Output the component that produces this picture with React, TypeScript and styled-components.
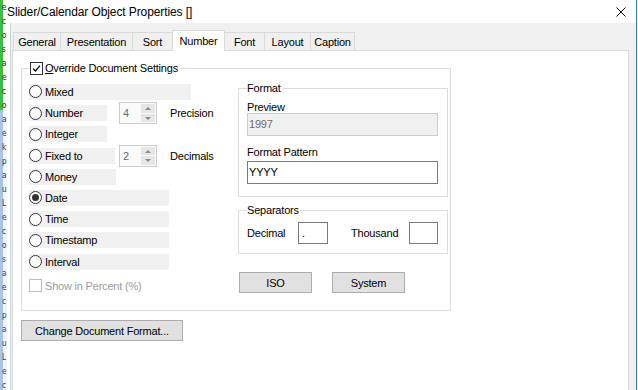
import styled, { createGlobalStyle } from "styled-components";

const GlobalStyle = createGlobalStyle`
  html, body {
    margin: 0;
    padding: 0;
    background: #fff;
  }
  body {
    font-family: "Liberation Sans", Arial, sans-serif;
    font-size: 11px;
    letter-spacing: -0.2px;
    color: #000;
  }
  * {
    box-sizing: border-box;
  }
`;

const TABS = [
  { label: "General", w: 47 },
  { label: "Presentation", w: 72 },
  { label: "Sort", w: 40 },
  { label: "Number", w: 53 },
  { label: "Font", w: 39 },
  { label: "Layout", w: 46 },
  { label: "Caption", w: 45 },
];
const ACTIVE_TAB = 3;

type Option = {
  label: string;
  w: number;
  spin?: { value: string; label: string };
  checked?: boolean;
};

const OPTIONS: Option[] = [
  { label: "Mixed", w: 162 },
  { label: "Number", w: 78, spin: { value: "4", label: "Precision" } },
  { label: "Integer", w: 78 },
  { label: "Fixed to", w: 86, spin: { value: "2", label: "Decimals" } },
  { label: "Money", w: 87 },
  { label: "Date", w: 140, checked: true },
  { label: "Time", w: 140 },
  { label: "Timestamp", w: 140 },
  { label: "Interval", w: 140 },
];

// fragments of the window lying behind the dialog
const BACKDROP = "ecosaecoaekpauLecosaecpauLec".split("");

const CheckMark = () => (
  <svg width="9" height="9" viewBox="0 0 9 9">
    <path d="M1 4.6 L3.4 7 L8 1.6" fill="none" stroke="#000" strokeWidth="1.2" />
  </svg>
);

const CloseIcon = () => (
  <svg width="10" height="10" viewBox="0 0 10 10">
    <path d="M0.5 0.5 L9.5 9.5 M9.5 0.5 L0.5 9.5" stroke="#000" strokeWidth="1" />
  </svg>
);

const App = () => {
  return (
    <>
      <GlobalStyle />
      <S.Screen>
        <S.Backdrop>
          {BACKDROP.map((ch, i) => (
            <S.BackdropChar key={i} $blue={i > 7}>
              {ch}
            </S.BackdropChar>
          ))}
        </S.Backdrop>

        <S.Dialog>
          <S.TitleBar>
            <S.Title>Slider/Calendar Object Properties []</S.Title>
            <CloseIcon />
          </S.TitleBar>

          <S.Body>
            <S.TabRow>
              {TABS.map((tab, i) => (
                <S.Tab
                  key={tab.label}
                  $w={tab.w}
                  $active={i === ACTIVE_TAB}
                  $noLeft={i === ACTIVE_TAB + 1}
                  $last={i === TABS.length - 1}
                >
                  {tab.label}
                </S.Tab>
              ))}
            </S.TabRow>

            <S.Panel>
              <S.Group>
                <S.Legend>
                  <S.Check>
                    <CheckMark />
                  </S.Check>
                  <span>
                    <u>O</u>verride Document Settings
                  </span>
                </S.Legend>

                <S.Columns>
                  <S.Options>
                    {OPTIONS.map((opt) => (
                      <S.OptionRow key={opt.label}>
                        <S.OptionBox $w={opt.w}>
                          <S.Radio>{opt.checked && <S.RadioDot />}</S.Radio>
                          {opt.label}
                        </S.OptionBox>
                        {opt.spin && (
                          <>
                            <S.Spinner>
                              <S.SpinValue>{opt.spin.value}</S.SpinValue>
                              <S.SpinButtons>
                                <S.SpinButton>
                                  <S.Arrow $up />
                                </S.SpinButton>
                                <S.SpinButton>
                                  <S.Arrow />
                                </S.SpinButton>
                              </S.SpinButtons>
                            </S.Spinner>
                            <S.SpinLabel>{opt.spin.label}</S.SpinLabel>
                          </>
                        )}
                      </S.OptionRow>
                    ))}
                    <S.PercentRow>
                      <S.Check $disabled />
                      Show in Percent (%)
                    </S.PercentRow>
                  </S.Options>

                  <S.Side>
                    <S.SubGroup $pb={12}>
                      <S.SubLegend>Format</S.SubLegend>
                      <S.FieldLabel $mt={7}>Preview</S.FieldLabel>
                      <S.TextBox $disabled>1997</S.TextBox>
                      <S.FieldLabel $mt={10}>Format Pattern</S.FieldLabel>
                      <S.TextBox $mt={3}>YYYY</S.TextBox>
                    </S.SubGroup>

                    <S.SubGroup $pb={9} $mt={7}>
                      <S.SubLegend>Separators</S.SubLegend>
                      <S.SepRow>
                        <S.SepLabel $w={51}>Decimal</S.SepLabel>
                        <S.SepBox $w={30}>.</S.SepBox>
                        <S.SepLabel $ml={23}>Thousand</S.SepLabel>
                        <S.SepBox $w={29} $end />
                      </S.SepRow>
                    </S.SubGroup>

                    <S.ButtonRow>
                      <S.Button $w={73}>ISO</S.Button>
                      <S.Button $w={73}>System</S.Button>
                    </S.ButtonRow>
                  </S.Side>
                </S.Columns>
              </S.Group>

              <S.WideButton>Change Document Format...</S.WideButton>
            </S.Panel>
          </S.Body>
        </S.Dialog>
      </S.Screen>
    </>
  );
};

const S = {
  Screen: styled.div`
    display: flex;
    width: 638px;
    height: 390px;
    overflow: hidden;
    background: #fff;
  `,

  Backdrop: styled.div`
    flex: none;
    width: 7px;
    display: flex;
    flex-direction: column;
    padding-top: 1px;
    overflow: hidden;
    background:
      linear-gradient(to right, #35c23d 3px, #fff 3px) top / 100% 110px no-repeat,
      linear-gradient(to right, #a8c5e6 3px, #eef4fb 3px);
  `,

  BackdropChar: styled.span<{ $blue?: boolean }>`
    height: 14px;
    margin-left: 2px;
    font-family: "DejaVu Sans Condensed", "DejaVu Sans", sans-serif;
    font-size: 8px;
    letter-spacing: 0;
    line-height: 14px;
    color: ${({ $blue }) => ($blue ? "#1d3a6e" : "#1a1a1a")};
  `,

  Dialog: styled.div`
    flex: none;
    width: 630px;
    display: flex;
    flex-direction: column;
    background: #fff;
    border-right: 1px solid #1883d7;
  `,

  TitleBar: styled.div`
    flex: none;
    height: 23px;
    display: flex;
    align-items: center;
    justify-content: space-between;
    padding-right: 10px;
  `,

  Title: styled.div`
    font-size: 12px;
    letter-spacing: -0.1px;
    line-height: 14px;
  `,

  Body: styled.div`
    flex: 1;
    display: flex;
    flex-direction: column;
    margin-left: 3px;
    padding: 7px 7px 0 1px;
    background: #f0f0f0;
    border-left: 1px solid #c6d3e3;
  `,

  TabRow: styled.div`
    flex: none;
    display: flex;
    align-items: flex-end;
    height: 20px;
    padding-left: 1px;
  `,

  Tab: styled.div<{ $w: number; $active?: boolean; $noLeft?: boolean; $last?: boolean }>`
    flex: none;
    width: ${({ $w }) => $w}px;
    height: ${({ $active }) => ($active ? 21 : 18)}px;
    margin-bottom: ${({ $active }) => ($active ? -1 : 0)}px;
    padding-top: 2px;
    line-height: ${({ $active }) => ($active ? 16 : 15)}px;
    text-align: center;
    white-space: nowrap;
    background: ${({ $active }) => ($active ? "#fff" : "#f0f0f0")};
    border-top: 1px solid #d9d9d9;
    border-left: ${({ $noLeft }) => ($noLeft ? "none" : "1px solid #d9d9d9")};
    border-right: ${({ $active, $last }) =>
      $active || $last ? "1px solid #d9d9d9" : "none"};
    position: ${({ $active }) => ($active ? "relative" : "static")};
    z-index: ${({ $active }) => ($active ? 1 : "auto")};
  `,

  Panel: styled.div`
    flex: 1;
    padding: 10px 0 0 8px;
    background: #fff;
    border: 1px solid #d9d9d9;
    border-bottom: none;
  `,

  Group: styled.fieldset`
    width: 430px;
    min-width: 0;
    margin: 0;
    padding: 6px 0 17px 7px;
    border: 1px solid #dcdcdc;
  `,

  Legend: styled.legend`
    display: flex;
    align-items: center;
    gap: 2px;
    height: 14px;
    padding: 0 2px 0 1px;
    line-height: 14px;
  `,

  Check: styled.span<{ $disabled?: boolean }>`
    flex: none;
    display: flex;
    align-items: center;
    justify-content: center;
    width: 13px;
    height: 13px;
    background: #fff;
    border: 1px solid ${({ $disabled }) => ($disabled ? "#bcbcbc" : "#333")};
  `,

  Columns: styled.div`
    display: grid;
    grid-template-columns: 209px 212px;
    align-items: start;
  `,

  Options: styled.div`
    display: flex;
    flex-direction: column;
  `,

  OptionRow: styled.div`
    display: grid;
    grid-template-columns: 90px 51px auto;
    align-items: center;
    height: 21.25px;
  `,

  OptionBox: styled.div<{ $w: number }>`
    grid-column: 1;
    display: flex;
    align-items: center;
    gap: 3px;
    width: ${({ $w }) => $w}px;
    height: 16px;
    line-height: 16px;
    white-space: nowrap;
    background: #f0f0f0;
  `,

  Radio: styled.span`
    flex: none;
    display: flex;
    align-items: center;
    justify-content: center;
    width: 13px;
    height: 13px;
    border-radius: 50%;
    background: #fff;
    border: 1px solid #333;
  `,

  RadioDot: styled.span`
    width: 7px;
    height: 7px;
    border-radius: 50%;
    background: #333;
  `,

  Spinner: styled.div`
    grid-column: 2;
    display: flex;
    width: 38px;
    height: 22px;
    background: #fafafa;
    border: 1px solid #cccccc;
  `,

  SpinValue: styled.div`
    flex: 1;
    padding-left: 3px;
    line-height: 20px;
    color: #6d6d6d;
  `,

  SpinButtons: styled.div`
    flex: none;
    display: flex;
    flex-direction: column;
    gap: 1px;
    width: 16px;
    padding: 1px;
  `,

  SpinButton: styled.div`
    flex: 1;
    display: flex;
    align-items: center;
    justify-content: center;
    background: #e6e6e6;
  `,

  Arrow: styled.span<{ $up?: boolean }>`
    width: 0;
    height: 0;
    border-left: 3px solid transparent;
    border-right: 3px solid transparent;
    border-${({ $up }) => ($up ? "bottom" : "top")}: 3px solid #8a8a8a;
  `,

  SpinLabel: styled.div`
    grid-column: 3;
    line-height: 16px;
    white-space: nowrap;
  `,

  PercentRow: styled.div`
    display: flex;
    align-items: center;
    gap: 3px;
    height: 13px;
    margin-top: 7px;
    color: #9a9a9a;
  `,

  Side: styled.div`
    display: flex;
    flex-direction: column;
    padding-top: 1px;
  `,

  SubGroup: styled.fieldset<{ $pb: number; $mt?: number }>`
    width: 210px;
    min-width: 0;
    margin: ${({ $mt }) => $mt ?? 0}px 0 0 0;
    padding: 0 9px ${({ $pb }) => $pb}px 8px;
    border: 1px solid #dcdcdc;
  `,

  SubLegend: styled.legend`
    padding: 0 1px 0 0;
    line-height: 12px;
  `,

  FieldLabel: styled.div<{ $mt: number }>`
    margin-top: ${({ $mt }) => $mt}px;
    line-height: 12px;
  `,

  TextBox: styled.div<{ $disabled?: boolean; $mt?: number }>`
    width: 191px;
    height: 23px;
    margin-top: ${({ $mt }) => $mt ?? 0}px;
    padding-left: 1px;
    line-height: 21px;
    color: ${({ $disabled }) => ($disabled ? "#6d6d6d" : "#000")};
    background: ${({ $disabled }) => ($disabled ? "#f0f0f0" : "#fff")};
    border: 1px solid ${({ $disabled }) => ($disabled ? "#cccccc" : "#7a7a7a")};
  `,

  SepRow: styled.div`
    display: flex;
    align-items: center;
    height: 22px;
    margin-top: 6px;
  `,

  SepLabel: styled.span<{ $w?: number; $ml?: number }>`
    flex: none;
    width: ${({ $w }) => ($w ? `${$w}px` : "auto")};
    margin-left: ${({ $ml }) => $ml ?? 0}px;
  `,

  SepBox: styled.div<{ $w: number; $end?: boolean }>`
    flex: none;
    width: ${({ $w }) => $w}px;
    height: 22px;
    margin-left: ${({ $end }) => ($end ? "auto" : "0")};
    padding-left: 3px;
    line-height: 20px;
    background: #fff;
    border: 1px solid #7a7a7a;
  `,

  ButtonRow: styled.div`
    display: flex;
    gap: 20px;
    margin-top: 18px;
    padding-left: 1px;
  `,

  Button: styled.button<{ $w: number }>`
    width: ${({ $w }) => $w}px;
    height: 21px;
    padding: 0;
    font: inherit;
    letter-spacing: inherit;
    color: #000;
    background: #e1e1e1;
    border: 1px solid #adadad;
    border-radius: 0;
  `,

  WideButton: styled.button`
    display: block;
    width: 162px;
    height: 21px;
    margin-top: 9px;
    padding: 0;
    font: inherit;
    letter-spacing: inherit;
    color: #000;
    background: #e1e1e1;
    border: 1px solid #adadad;
    border-radius: 0;
  `,
};

export default App;
